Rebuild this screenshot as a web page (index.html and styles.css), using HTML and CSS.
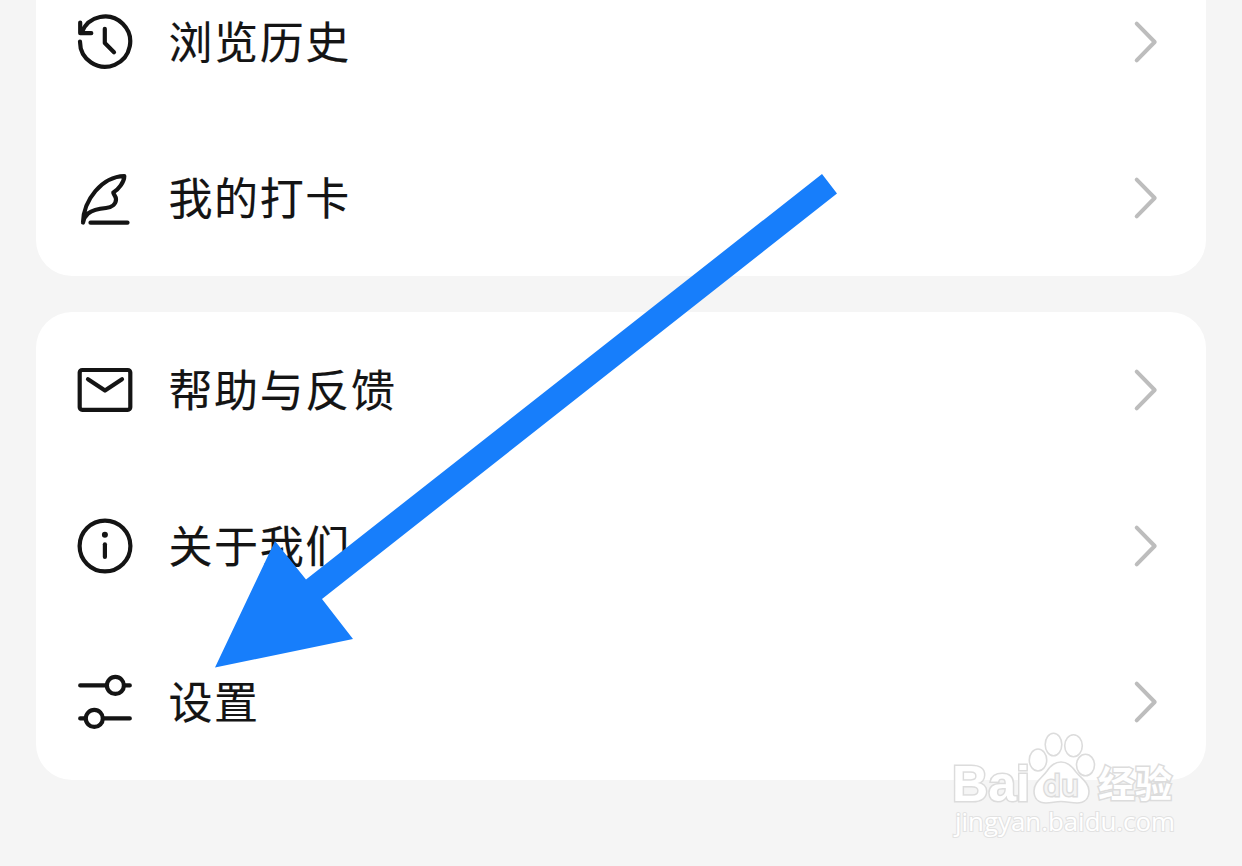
FILE: index.html
```html
<!DOCTYPE html>
<html lang="zh-CN">
    <head>
        <meta charset="utf-8">
        <title>设置</title>
        <link rel="stylesheet" href="styles.css">
    </head>
    <body>
        <div class="page">
            <div class="card card-top">
                <div class="row">
                    <svg class="icon" viewBox="0 0 60 60">
                        <path d="M5.2 10.5V21.2H16.3M6.8 20.3A25.1 25.1 0 1 1 5 29.5"/>
                        <path d="M29.8 16.8V31L39 40.2"/>
                    </svg>
                    <span class="label">浏览历史</span>
                    <svg class="chevron" viewBox="0 0 30 44"><path d="M5.7 3.7L23.7 22L5.7 40.3"/></svg>
                </div>
                <div class="row">
                    <svg class="icon" viewBox="0 0 60 60">
                        <path d="M8 54.5C8.5 32 27 8.5 49.3 8C49.3 14 43.5 21.5 38.3 24.5C38 26 41.2 28 41 31.5C40.8 36 37 39.5 31 40C24 40.5 18 41.5 13 45.5C10 48 8.8 50.5 8 54.5Z"/>
                        <path d="M15.5 54.7H52.5"/>
                    </svg>
                    <span class="label">我的打卡</span>
                    <svg class="chevron" viewBox="0 0 30 44"><path d="M5.7 3.7L23.7 22L5.7 40.3"/></svg>
                </div>
            </div>
            <div class="card">
                <div class="row">
                    <svg class="icon" viewBox="0 0 60 60">
                        <rect x="4.7" y="10" width="50.6" height="39.8" rx="2.5"/>
                        <path d="M13 19.2L30 30.5L47 19.2"/>
                    </svg>
                    <span class="label">帮助与反馈</span>
                    <svg class="chevron" viewBox="0 0 30 44"><path d="M5.7 3.7L23.7 22L5.7 40.3"/></svg>
                </div>
                <div class="row">
                    <svg class="icon" viewBox="0 0 60 60">
                        <circle cx="30" cy="30" r="25.4"/>
                        <circle class="dot" cx="29.9" cy="18.8" r="3"/>
                        <path d="M29.9 28.3V41"/>
                    </svg>
                    <span class="label">关于我们</span>
                    <svg class="chevron" viewBox="0 0 30 44"><path d="M5.7 3.7L23.7 22L5.7 40.3"/></svg>
                </div>
                <div class="row">
                    <svg class="icon" viewBox="0 0 60 60">
                        <path d="M5.2 13.4H31.5M49.5 13.4H54.8M5.2 46.4H10M28.5 46.4H54.8"/>
                        <circle cx="40.4" cy="13.4" r="8.5"/>
                        <circle cx="19.3" cy="46.4" r="8.5"/>
                    </svg>
                    <span class="label">设置</span>
                    <svg class="chevron" viewBox="0 0 30 44"><path d="M5.7 3.7L23.7 22L5.7 40.3"/></svg>
                </div>
            </div>

            <!-- pointer to the settings row -->
            <svg class="arrow" viewBox="0 0 622 494">
                <polygon points="0,493.5 60,367 91,405.5 607,0 622,19.5 107,425 138,465"/>
            </svg>

            <svg class="watermark" viewBox="0 0 250 130">
                <text class="wm-bold" x="12" y="80.5" textLength="78" lengthAdjust="spacingAndGlyphs">Bai</text>
                <ellipse cx="98" cy="40" rx="8.7" ry="11"/>
                <ellipse cx="113.5" cy="24.5" rx="8.3" ry="11.3"/>
                <ellipse cx="133.5" cy="25.7" rx="8.8" ry="11"/>
                <ellipse cx="145.5" cy="45" rx="9" ry="10.8"/>
                <path d="M121 42C128 42 132 46 136 52C141 58 149 63 149 71C149 79 144 83 137 83C131 83 127 81.5 121 81.5C115 81.5 112 83 106 83C99 83 94 79 94 71C94 62 102 58 107 51C111 45 115 42 121 42Z"/>
                <text class="wm-du" x="103" y="76" textLength="36" lengthAdjust="spacingAndGlyphs">du</text>
                <text class="wm-cn" x="158" y="78" textLength="74" lengthAdjust="spacingAndGlyphs">经验</text>
                <text class="wm-url" x="15" y="111" textLength="220" lengthAdjust="spacingAndGlyphs">jingyan.baidu.com</text>
            </svg>
        </div>
    </body>
</html>
```

FILE: styles.css
```css
body {
    background-color: #f5f5f5;
    font-family: "Noto Sans CJK SC", sans-serif;
    margin: 0;
}

.page {
    box-sizing: border-box;
    height: 866px;
    overflow: hidden;
    padding: 0 36px;
    position: relative;
}

.card {
    background-color: #fff;
    border-radius: 36px;
    margin-bottom: 36px;
    overflow: hidden;
}

/* the first row is partly scrolled off */
.card-top {
    border-radius: 0 0 36px 36px;
    display: flex;
    flex-direction: column;
    height: 276px;
    justify-content: flex-end;
}

.row {
    align-items: center;
    display: flex;
    flex-shrink: 0;
    height: 156px;
    padding: 0 45px 0 39px;
}

.icon {
    fill: none;
    height: 60px;
    stroke: #141414;
    stroke-linecap: round;
    stroke-linejoin: round;
    stroke-width: 4.2;
    width: 60px;
}

.icon .dot {
    fill: #141414;
    stroke: none;
}

.label {
    -webkit-text-stroke: 0.15px #141414;
    color: #141414;
    flex: 1;
    font-size: 44px;
    letter-spacing: 1.6px;
    line-height: 64px;
    margin-left: 33.5px;
    padding-bottom: 5px;
}

.chevron {
    fill: none;
    height: 44px;
    stroke: #bdbdbd;
    stroke-linecap: round;
    stroke-linejoin: round;
    stroke-width: 4;
    width: 30px;
}

.arrow {
    fill: #177efb;
    height: 494px;
    left: 215px;
    position: absolute;
    top: 174px;
    width: 622px;
}

.watermark {
    fill: #fff;
    height: 130px;
    left: 940px;
    position: absolute;
    stroke: #dcdcdc;
    stroke-width: 1.6;
    top: 720px;
    width: 250px;
}

.watermark text {
    paint-order: stroke;
    stroke-width: 3;
}

.wm-bold {
    font-family: "Liberation Sans", sans-serif;
    font-size: 50px;
    font-weight: bold;
}

.wm-du {
    fill: #f4f4f4;
    font-family: "DejaVu Sans", sans-serif;
    font-size: 29px;
}

.wm-cn {
    font-size: 37px;
    font-weight: 700;
}

.watermark .wm-url {
    font-family: "Open Sans", sans-serif;
    font-size: 25px;
    stroke: #e2e2e2;
    stroke-width: 2;
}
```
